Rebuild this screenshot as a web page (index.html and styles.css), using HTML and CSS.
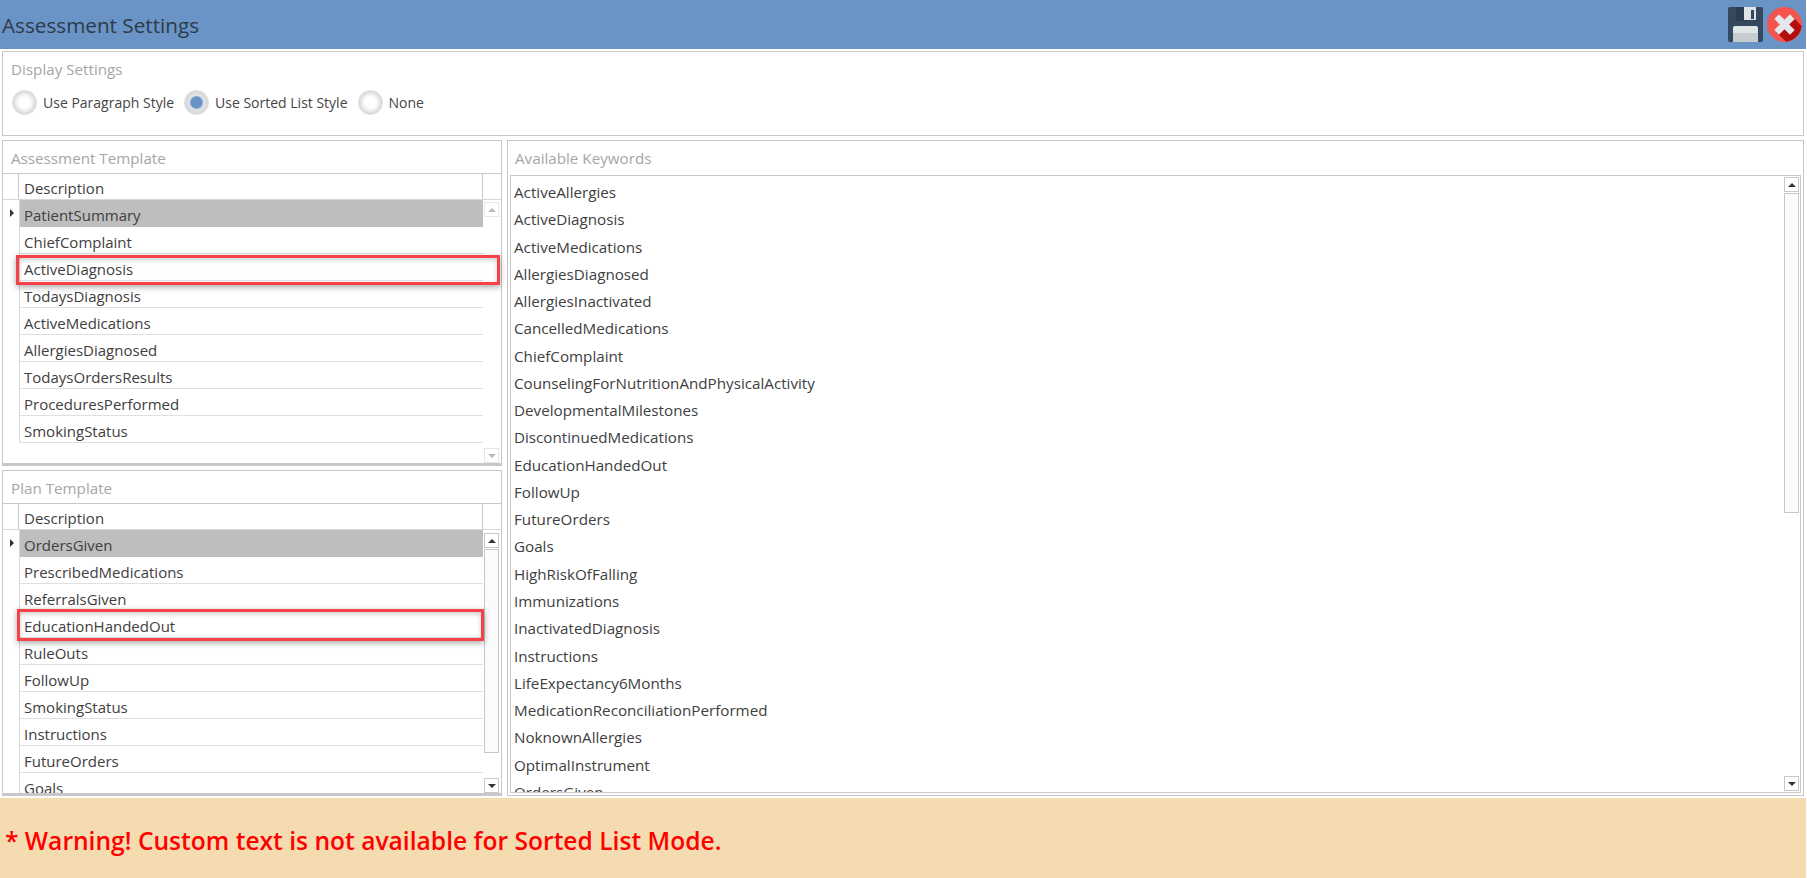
FILE: index.html
```html
<!DOCTYPE html>
<html lang="en">
<head>
<meta charset="utf-8">
<title>Assessment Settings</title>
<link rel="stylesheet" href="styles.css">
</head>
<body>
<div class="app">
  <header class="titlebar">
    <h1 class="title">Assessment Settings</h1>
    <div class="actions">
      <svg class="icon" viewBox="0 0 35 35" aria-label="Save">
        <rect width="35" height="35" rx="2" fill="#34495e"/>
        <path d="M8 0h20v14H8z" fill="#2c3e50"/>
        <path d="M16 0h12v13H16z" fill="#dfe3e6"/>
        <rect x="23" y="3" width="3" height="9" fill="#34495e"/>
        <path d="M5 21a2 2 0 0 1 2-2h21a2 2 0 0 1 2 2v14H5z" fill="#dfe4e6"/>
        <path d="M5 26h25v9H5z" fill="#c5cbce"/>
      </svg>
      <svg class="icon" viewBox="0 0 35 35" aria-label="Close">
        <circle cx="17.5" cy="17.5" r="17.5" fill="#f6544f"/>
        <path d="M9 25 25 9 34.6 19A17.5 17.5 0 0 1 19 34.6Z" fill="#b30d0d"/>
        <path d="M12 8.300 17.500 13.800 23 8.300 26.700 12 21.200 17.500 26.700 23 23 26.700 17.500 21.200 12 26.700 8.300 23 13.800 17.500 8.300 12Z" fill="#e4e7ee" stroke="#e4e7ee" stroke-width="1.500" stroke-linejoin="round"/>
      </svg>
    </div>
  </header>

  <section class="group display-group">
    <div class="group-title">Display Settings</div>
    <div class="radios">
      <label class="radio"><span class="radio-dot"></span>Use Paragraph Style</label>
      <label class="radio"><span class="radio-dot on"></span>Use Sorted List Style</label>
      <label class="radio"><span class="radio-dot"></span>None</label>
    </div>
  </section>

  <main class="columns">
    <div class="left">
      <section class="group template assessment">
        <div class="group-title">Assessment Template</div>
        <div class="grid">
          <div class="grid-head"><span class="corner"></span><span class="head-cell">Description</span><span class="head-end"></span></div>
          <div class="grid-body">
            <div class="gutter"><span class="marker"></span></div>
            <div class="rows">
              <div class="row selected">PatientSummary</div>
              <div class="row">ChiefComplaint</div>
              <div class="row">ActiveDiagnosis</div>
              <div class="row">TodaysDiagnosis</div>
              <div class="row">ActiveMedications</div>
              <div class="row">AllergiesDiagnosed</div>
              <div class="row">TodaysOrdersResults</div>
              <div class="row">ProceduresPerformed</div>
              <div class="row">SmokingStatus</div>
            </div>
            <div class="scrollbar disabled">
              <span class="sb-btn"><span class="arrow up"></span></span>
              <span class="sb-track"></span>
              <span class="sb-btn"><span class="arrow down"></span></span>
            </div>
          </div>
        </div>
        <div class="callout callout-a"></div>
      </section>

      <section class="group template plan">
        <div class="group-title">Plan Template</div>
        <div class="grid">
          <div class="grid-head"><span class="corner"></span><span class="head-cell">Description</span><span class="head-end"></span></div>
          <div class="grid-body">
            <div class="gutter"><span class="marker"></span></div>
            <div class="rows">
              <div class="row selected">OrdersGiven</div>
              <div class="row">PrescribedMedications</div>
              <div class="row">ReferralsGiven</div>
              <div class="row">EducationHandedOut</div>
              <div class="row">RuleOuts</div>
              <div class="row">FollowUp</div>
              <div class="row">SmokingStatus</div>
              <div class="row">Instructions</div>
              <div class="row">FutureOrders</div>
              <div class="row">Goals</div>
            </div>
            <div class="scrollbar plan-bar">
              <span class="sb-btn"><span class="arrow up"></span></span>
              <span class="sb-track"><span class="sb-thumb plan-thumb"></span></span>
              <span class="sb-btn"><span class="arrow down"></span></span>
            </div>
          </div>
        </div>
        <div class="callout callout-b"></div>
      </section>
    </div>

    <section class="group keywords">
      <div class="group-title">Available Keywords</div>
      <div class="listbox">
        <div class="items">
          <div class="item">ActiveAllergies</div>
          <div class="item">ActiveDiagnosis</div>
          <div class="item">ActiveMedications</div>
          <div class="item">AllergiesDiagnosed</div>
          <div class="item">AllergiesInactivated</div>
          <div class="item">CancelledMedications</div>
          <div class="item">ChiefComplaint</div>
          <div class="item">CounselingForNutritionAndPhysicalActivity</div>
          <div class="item">DevelopmentalMilestones</div>
          <div class="item">DiscontinuedMedications</div>
          <div class="item">EducationHandedOut</div>
          <div class="item">FollowUp</div>
          <div class="item">FutureOrders</div>
          <div class="item">Goals</div>
          <div class="item">HighRiskOfFalling</div>
          <div class="item">Immunizations</div>
          <div class="item">InactivatedDiagnosis</div>
          <div class="item">Instructions</div>
          <div class="item">LifeExpectancy6Months</div>
          <div class="item">MedicationReconciliationPerformed</div>
          <div class="item">NoknownAllergies</div>
          <div class="item">OptimalInstrument</div>
          <div class="item">OrdersGiven</div>
        </div>
        <div class="scrollbar list-bar">
          <span class="sb-btn"><span class="arrow up"></span></span>
          <span class="sb-track"><span class="sb-thumb kw-thumb"></span></span>
          <span class="sb-btn"><span class="arrow down"></span></span>
        </div>
      </div>
    </section>
  </main>

  <footer class="warning">* Warning! Custom text is not available for Sorted List Mode.</footer>
</div>
</body>
</html>
```
FILE: styles.css
```css
* { box-sizing: border-box; }
html, body { margin: 0; height: 100%; overflow: hidden; background: #fff; }
body { font-family: "Open Sans", "Noto Sans", sans-serif; font-size: 15px; color: #404040; }
.app { width: 1806px; height: 878px; display: flex; flex-direction: column; }

.titlebar { height: 49px; flex: none; background: #6a93c6; display: flex; justify-content: space-between; align-items: flex-start; padding: 7px 4px 0 2px; }
.title { margin: -1px 0 0; font-size: 20.700px; line-height: 38px; font-weight: 400; color: #2d3a4a; }
.actions { display: flex; gap: 4px; }
.icon { width: 35px; height: 35px; display: block; }

.group { border: 1px solid #c8c8c8; background: #fff; position: relative; }
.group-title { color: #a6a6a6; font-size: 15.200px; line-height: 20px; padding-left: 8px; }
.display-group { height: 85px; margin: 2px 2px 0 2px; flex: none; }
.display-group .group-title { height: 38px; padding-top: 7px; }
.radios { display: flex; gap: 10px; padding-left: 9px; }
.radio { display: flex; align-items: center; gap: 6px; height: 25px; font-size: 14px; color: #454545; }
.radio-dot { width: 25px; height: 25px; border-radius: 50%; background: radial-gradient(circle, #fff 0 5px, #f0f0f0 8px, #dadada 11px, #e6e6e6 12.500px); }
.radio-dot.on { background: radial-gradient(circle, #6a93c6 0 5.500px, #dfe3e8 7px, #d8d8d8 11px, #e6e6e6 12.500px); }

.columns { flex: 1; min-height: 0; display: flex; gap: 5px; padding: 4px 2px 2px 2px; }
.left { width: 500px; flex: none; display: flex; flex-direction: column; gap: 4px; }
.template { border-width: 1px 1px 3px 1px; }
.assessment { height: 326px; flex: none; }
.plan { flex: 1; min-height: 0; overflow: hidden; }
.template .group-title { height: 32px; padding-top: 7px; }

.grid { border-top: 1px solid #c8c8c8; }
.grid-head { height: 26px; display: flex; border-bottom: 1px solid #d8d8d8; }
.corner { width: 16px; border-right: 1px solid #c8c8c8; flex: none; }
.head-cell { flex: 1; padding: 3px 0 0 5px; line-height: 22px; border-right: 1px solid #c8c8c8; }
.head-end { width: 18px; flex: none; }
.grid-body { display: flex; height: 263px; overflow: hidden; }
.gutter { width: 16px; flex: none; position: relative; }
.marker { position: absolute; left: 7px; top: 9px; border-left: 4px solid #333; border-top: 4px solid transparent; border-bottom: 4px solid transparent; }
.rows { flex: 1; align-self: flex-start; border-left: 1px solid #d8d8d8; }
.row { height: 27px; padding: 4px 0 0 4px; line-height: 22px; border-bottom: 1px solid #e0e0e0; white-space: nowrap; }
.row.selected { background: #bebebe; border-bottom-color: #bebebe; }

.scrollbar { width: 15px; margin: 2px 2px 0 1px; display: flex; flex-direction: column; gap: 1px; flex: none; }
.plan-bar { margin-top: 3px; margin-bottom: 0; }
.list-bar { margin: 1px 1px 1px 0; }
.sb-btn { height: 15px; flex: none; border: 1px solid #c8c8c8; background: #fff; display: flex; align-items: center; justify-content: center; }
.sb-track { flex: 1; min-height: 0; display: block; }
.sb-thumb { display: block; border: 1px solid #c8c8c8; background: #fbfbfb; }
.plan-thumb { height: 204px; }
.kw-thumb { height: 320px; }
.arrow { width: 0; height: 0; border-left: 4px solid transparent; border-right: 4px solid transparent; }
.arrow.up { border-bottom: 4px solid #333; }
.arrow.down { border-top: 4px solid #333; }
.disabled { height: 261px; justify-content: space-between; }
.disabled .sb-btn { border-color: #e6e6e6; }
.disabled .sb-track { display: none; }
.disabled .arrow.up { border-bottom-color: #bbb; }
.disabled .arrow.down { border-top-color: #bbb; }

.callout { position: absolute; border: 3px solid #f44248; box-shadow: 0 2px 6px rgba(0,0,0,.35), inset 0 2px 5px rgba(0,0,0,.2); pointer-events: none; }
.callout-a { left: 13px; top: 114px; width: 484px; height: 30px; }
.callout-b { left: 14px; top: 138px; width: 467px; height: 32px; }

.keywords { flex: 1; min-width: 0; }
.keywords .group-title { height: 34px; padding: 7px 0 0 7px; }
.listbox { margin: 0 2px; height: 618px; border: 1px solid #c8c8c8; display: flex; overflow: hidden; }
.items { flex: 1; padding: 3px 0 0 3px; overflow: hidden; font-size: 15.200px; }
.item { height: 27.270px; line-height: 27px; white-space: nowrap; }

.warning { height: 80px; flex: none; background: #f5dcb0; color: #ff0000; font-size: 24.600px; font-weight: 600; line-height: 85px; padding-left: 5px; }
```
